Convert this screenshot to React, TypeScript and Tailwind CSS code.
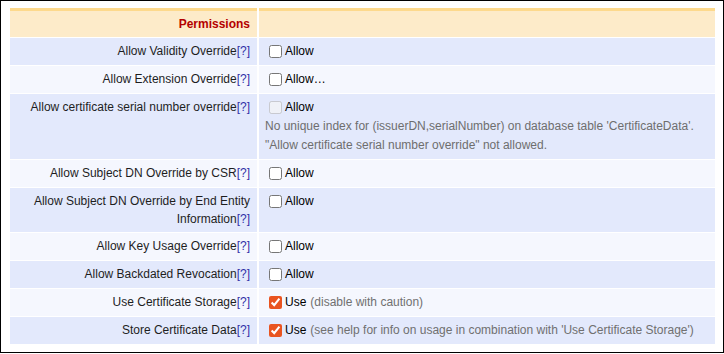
import React from 'react';

type Row = {
  label: string;
  text: string;
  note?: string;
  checked?: boolean;
  disabled?: boolean;
  help?: string[];
};

const rows: Row[] = [
  { label: 'Allow Validity Override', text: 'Allow' },
  { label: 'Allow Extension Override', text: 'Allow…' },
  {
    label: 'Allow certificate serial number override',
    text: 'Allow',
    disabled: true,
    help: [
      "No unique index for (issuerDN,serialNumber) on database table 'CertificateData'.",
      '"Allow certificate serial number override" not allowed.',
    ],
  },
  { label: 'Allow Subject DN Override by CSR', text: 'Allow' },
  { label: 'Allow Subject DN Override by End Entity Information', text: 'Allow' },
  { label: 'Allow Key Usage Override', text: 'Allow' },
  { label: 'Allow Backdated Revocation', text: 'Allow' },
  { label: 'Use Certificate Storage', text: 'Use', note: '(disable with caution)', checked: true },
  {
    label: 'Store Certificate Data',
    text: 'Use',
    note: "(see help for info on usage in combination with 'Use Certificate Storage')",
    checked: true,
  },
];

const App = () => {
  return (
    <div className="w-[724px] h-[353px] border border-black bg-white pt-[7px] pl-[9px] font-['Liberation_Sans',Arial,sans-serif] text-[12px] text-[#1e1e1e]">
      <div className="grid w-[705px] grid-cols-[247px_456px] gap-x-[2px] gap-y-[1px]">
        <div className="border-t-[3px] border-[#fdd98c] bg-[#fdebc9] py-[4px] pr-[7px] text-right font-bold leading-[18px] text-[#b40000]">
          Permissions
        </div>
        <div className="border-t-[3px] border-[#fdd98c] bg-[#fdebc9]" />

        {rows.map((row, i) => {
          const bg = i % 2 === 0 ? 'bg-[#e3e9fc]' : 'bg-[#f5f7fe]';
          return (
            <React.Fragment key={row.label}>
              <div className={`${bg} py-[4px] pr-[7px] pl-2 text-right leading-[18px]`}>
                {row.label}
                <a className="text-[#3232a8]">[?]</a>
              </div>
              <div className={`${bg} py-[4px] pl-[6px] pr-2 leading-[19px]`}>
                <div className="flex h-[19px] items-center whitespace-nowrap">
                  <input
                    type="checkbox"
                    defaultChecked={row.checked}
                    disabled={row.disabled}
                    className="m-0 ml-[4px] mr-[3px] h-[13px] w-[13px] accent-[#e95420]"
                  />
                  <span className="text-black">{row.text}</span>
                  {row.note && <span className="ml-1 text-[#707070]">{row.note}</span>}
                </div>
                {row.help && (
                  <div className="text-[#6e6e6e]">
                    {row.help.map((line) => (
                      <div key={line}>{line}</div>
                    ))}
                  </div>
                )}
              </div>
            </React.Fragment>
          );
        })}
      </div>
    </div>
  );
};

export default App;
